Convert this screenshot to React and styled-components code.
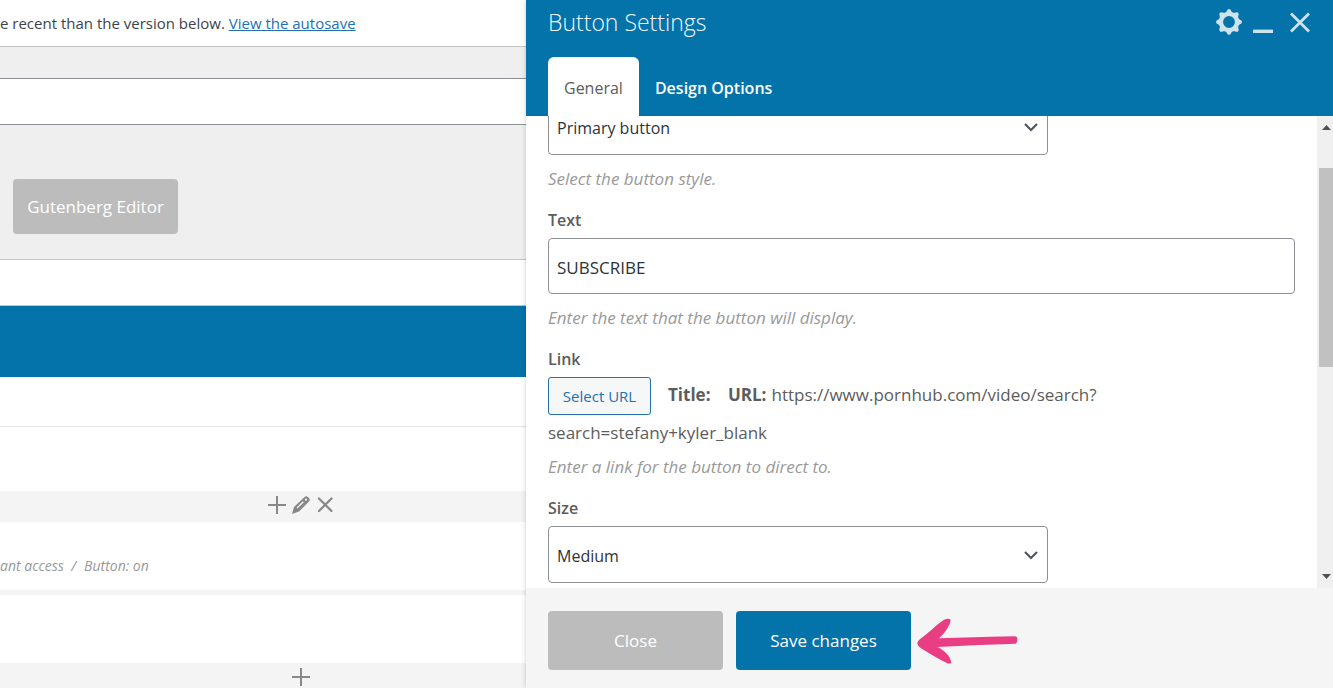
import React, { useLayoutEffect, useRef, useState } from "react";
import styled, { createGlobalStyle } from "styled-components";

const GlobalStyle = createGlobalStyle`
  * {
    box-sizing: border-box;
  }
  body {
    margin: 0;
    font-family: "Open Sans", "Noto Sans", sans-serif;
    color: #5c5c5c;
    background: #fff;
  }
  button, input, select {
    font-family: inherit;
    margin: 0;
  }
`;

const Layout = styled.div`
  display: grid;
  grid-template-columns: minmax(0, 526fr) minmax(0, 807fr);
  height: 100vh;
  overflow: hidden;
`;

/* editor page behind the panel */

const Editor = styled.main`
  display: flex;
  flex-direction: column;
  min-height: 0;
  overflow: hidden;
  white-space: nowrap;
`;

const Notice = styled.div`
  flex: none;
  padding: 11px 0;
  font-size: 15px;
  line-height: 24px;
  color: #3c434a;
  border-bottom: 1px solid #c3c4c7;
  a {
    color: #2271b1;
  }
`;

const TitleArea = styled.div`
  flex: none;
  padding: 31px 0 54px;
  background: #efefef;
`;

const TitleInput = styled.input`
  display: block;
  width: 100%;
  height: 47px;
  padding: 0 8px;
  font-size: 18px;
  background: #fff;
  border: solid #8c8f94;
  border-width: 1px 0;
  border-radius: 0;
  outline: none;
`;

const SwitchArea = styled.div`
  flex: none;
  padding: 0 13px 25px;
  background: #efefef;
  border-bottom: 1px solid #c3c4c7;
`;

const Button = styled.button`
  height: ${({ $height }) => $height || 59}px;
  width: ${({ $width }) => $width || 175}px;
  padding: 0;
  border: none;
  border-radius: 4px;
  font-size: 17px;
  color: #fff;
  background: ${({ $primary }) => ($primary ? "#0473aa" : "#bcbcbc")};
`;

const BuilderHead = styled.div`
  flex: none;
  height: 45px;
`;

const BuilderBar = styled.div`
  flex: none;
  height: 72px;
  background: #0473aa;
  border-top: 1px solid #c3c4c7;
`;

const BuilderNav = styled.div`
  flex: none;
  height: 50px;
  margin-bottom: 64px;
  border-bottom: 1px solid #e5e5e5;
`;

const Controls = styled.div`
  flex: none;
  display: flex;
  justify-content: center;
  align-items: center;
  gap: 4px;
  height: 31px;
  padding: 0 0 4px 75px;
  background: #f4f4f4;
`;

const ControlButton = styled.button`
  display: flex;
  padding: 0;
  border: none;
  background: none;
  color: #888;
`;

const ElementRow = styled.div`
  flex: none;
  height: 68px;
  padding-top: 33px;
  font-size: 14px;
  line-height: 22px;
  font-style: italic;
  color: #999;
  span + span {
    margin-left: 8px;
  }
`;

const Divider = styled.div`
  flex: none;
  height: 5px;
  margin-bottom: 68px;
  background: #f4f4f4;
`;

/* settings panel */

const Panel = styled.aside`
  display: flex;
  flex-direction: column;
  min-height: 0;
  background: #fff;
  box-shadow: 0 0 5px rgba(0, 0, 0, 0.2);
`;

const PanelHeader = styled.header`
  flex: none;
  padding: 4px 22px 0;
  background: #0473aa;
`;

const HeaderTop = styled.div`
  display: flex;
  justify-content: space-between;
  align-items: center;
  height: 36px;
`;

const PanelTitle = styled.h2`
  margin: 0;
  font-size: 23px;
  font-weight: 300;
  color: #f2f8fb;
`;

const HeaderActions = styled.div`
  display: flex;
  gap: 10px;
  button:last-child {
    margin-left: 5px;
  }
`;

const IconButton = styled.button`
  display: flex;
  padding: 0;
  border: none;
  background: none;
  color: #cde3ee;
`;

const Tabs = styled.div`
  display: flex;
  margin-top: 17px;
`;

const Tab = styled.button`
  height: 59px;
  padding: 2px 16px 0;
  border: none;
  border-radius: 6px 6px 0 0;
  font-size: 16px;
  font-weight: ${({ $active }) => ($active ? 400 : 600)};
  color: ${({ $active }) => ($active ? "#5c5c5c" : "#fff")};
  background: ${({ $active }) => ($active ? "#fff" : "transparent")};
`;

const PanelBody = styled.div`
  flex: 1;
  display: flex;
  min-height: 0;
`;

const Fields = styled.div`
  flex: 1;
  min-width: 0;
  padding: 0 22px 30px;
  overflow: hidden;
`;

const Field = styled.div`
  margin-bottom: 18px;
`;

const Label = styled.label`
  display: block;
  margin-bottom: 6px;
  font-size: 16px;
  line-height: 24px;
  font-weight: 600;
`;

const Description = styled.p`
  margin: ${({ $tight }) => ($tight ? 4 : 12)}px 0 0;
  font-size: 17px;
  line-height: 23px;
  font-style: italic;
  color: #999;
`;

const SelectWrap = styled.div`
  position: relative;
  width: 67%;
  svg {
    position: absolute;
    right: 10px;
    top: 50%;
    transform: translateY(-50%);
    pointer-events: none;
  }
`;

const Select = styled.select`
  display: block;
  appearance: none;
  width: 100%;
  height: 57px;
  padding: 2px 8px 0;
  font-size: 16px;
  color: #2c3338;
  background: #fff;
  border: 1px solid #8c8f94;
  border-radius: 4px;
`;

const TextInput = styled.input`
  display: block;
  width: 100%;
  height: 56px;
  padding: 2px 8px 0;
  font-size: 17px;
  color: #2c3338;
  background: #fff;
  border: 1px solid #8c8f94;
  border-radius: 4px;
`;

const LinkValue = styled.div`
  max-width: 560px;
  font-size: 17px;
  line-height: 36px;
  b {
    margin-right: 5px;
  }
  b + b {
    margin-left: 8px;
  }
`;

const UrlButton = styled.button`
  height: 38px;
  width: 103px;
  margin-right: 17px;
  padding: 0;
  font-size: 15px;
  vertical-align: top;
  color: #2271b1;
  background: #f6f7f7;
  border: 1px solid #2271b1;
  border-radius: 3px;
`;

const Scrollbar = styled.div`
  flex: none;
  display: flex;
  flex-direction: column;
  align-items: center;
  width: 16px;
  padding: 9px 0 9px 2px;
  background: #f0f0f0;
`;

const Track = styled.div`
  flex: 1;
  width: 100%;
  padding-top: 38px;
`;

const Thumb = styled.div`
  height: 49%;
  background: #c1c1c1;
`;

const PanelFooter = styled.footer`
  flex: none;
  display: flex;
  align-items: center;
  gap: 13px;
  padding: 23px 22px 18px;
  background: #f5f5f5;
`;

const ArrowWrap = styled.div`
  display: flex;
  margin-left: -7px;
`;

const PlusIcon = () => (
  <svg width="20" height="20" viewBox="0 0 20 20" fill="none" stroke="currentColor" strokeWidth="2">
    <path d="M10 1v18M1 10h18" />
  </svg>
);

const PencilIcon = () => (
  <svg width="20" height="20" viewBox="0 0 20 20" fill="currentColor" fillRule="evenodd">
    <path d="M1 19L3 12L13.5 2Q15 .6 17 2L18.3 3.4Q19.6 5 18 6.5L8 16.5ZM6.6 13.5L12.8 7.3L11.8 6.3L5.6 12.5ZM14 4.3A1 1 0 1 0 16 5A1 1 0 0 0 14 4.3Z" />
  </svg>
);

const RemoveIcon = () => (
  <svg width="20" height="20" viewBox="0 0 20 20" fill="none" stroke="currentColor" strokeWidth="2.2">
    <path d="M4 3.5l12.5 12.5M16.5 3.5l-12.5 12.5" strokeLinecap="round" />
  </svg>
);

const GearIcon = () => (
  <svg width="26" height="26" viewBox="-13 -13 26 26" fill="currentColor">
    <circle r="8" fill="none" stroke="currentColor" strokeWidth="4.2" />
    {[0, 45, 90, 135, 180, 225, 270, 315].map((deg) => (
      <path key={deg} d="M-4 -9L-2.4 -10.6Q-1.6 -13 0 -13Q1.6 -13 2.4 -10.6L4 -9Z" transform={`rotate(${deg})`} />
    ))}
  </svg>
);

const MinimizeIcon = () => (
  <svg width="22" height="26" viewBox="0 0 22 26" fill="none" stroke="currentColor" strokeWidth="3.4">
    <path d="M1 22.3h20" />
  </svg>
);

const CloseIcon = () => (
  <svg width="22" height="26" viewBox="0 0 22 26" fill="none" stroke="currentColor" strokeWidth="2.8">
    <path d="M2 4.5l18 18M20 4.5l-18 18" />
  </svg>
);

const Chevron = () => (
  <svg width="14" height="10" viewBox="0 0 14 10" fill="none" stroke="#50575e" strokeWidth="2.2">
    <path d="M1 2l6 6 6-6" />
  </svg>
);

const ScrollArrow = ({ down }) => (
  <svg width="9" height="5" viewBox="0 0 9 5" fill="#505050">
    <path d={down ? "M0 0h9L4.5 5z" : "M0 5h9L4.5 0z"} />
  </svg>
);

const PinkArrow = () => (
  <svg width="101" height="46" viewBox="0 0 303 138" fill="#e93e83">
    <path d="M1 75C2 69 8 64 20 55C42 39 60 18 80 6Q92 0 100 4Q102 10 96 22Q86 44 66 61L220 56L293 55Q303 56 301 66Q301 75 296 77L170 82L62 87C84 98 101 116 103 134Q98 139 88 134C60 122 34 104 12 91Q1 84 1 75Z" />
  </svg>
);

const App = () => {
  const fieldsRef = useRef(null);
  const [text, setText] = useState("SUBSCRIBE");
  const [tab, setTab] = useState("General");

  useLayoutEffect(() => {
    fieldsRef.current.scrollTop = 18;
  }, []);

  return (
    <>
      <GlobalStyle />
      <Layout>
        <Editor>
          <Notice>
            e recent than the version below. <a href="#autosave">View the autosave</a>
          </Notice>
          <TitleArea>
            <TitleInput aria-label="Title" />
          </TitleArea>
          <SwitchArea>
            <Button $width={165} $height={55}>Gutenberg Editor</Button>
          </SwitchArea>
          <BuilderHead />
          <BuilderBar />
          <BuilderNav />
          <Controls>
            <ControlButton aria-label="Add"><PlusIcon /></ControlButton>
            <ControlButton aria-label="Edit"><PencilIcon /></ControlButton>
            <ControlButton aria-label="Remove"><RemoveIcon /></ControlButton>
          </Controls>
          <ElementRow>
            <span>ant access&nbsp; /</span>
            <span>Button: on</span>
          </ElementRow>
          <Divider />
          <Controls>
            <ControlButton aria-label="Add"><PlusIcon /></ControlButton>
          </Controls>
        </Editor>

        <Panel>
          <PanelHeader>
            <HeaderTop>
              <PanelTitle>Button Settings</PanelTitle>
              <HeaderActions>
                <IconButton aria-label="Settings"><GearIcon /></IconButton>
                <IconButton aria-label="Minimize"><MinimizeIcon /></IconButton>
                <IconButton aria-label="Close panel"><CloseIcon /></IconButton>
              </HeaderActions>
            </HeaderTop>
            <Tabs>
              {["General", "Design Options"].map((name) => (
                <Tab key={name} $active={tab === name} onClick={() => setTab(name)}>
                  {name}
                </Tab>
              ))}
            </Tabs>
          </PanelHeader>

          <PanelBody>
            <Fields ref={fieldsRef}>
              <Field>
                <SelectWrap>
                  <Select aria-label="Style">
                    <option>Primary button</option>
                  </Select>
                  <Chevron />
                </SelectWrap>
                <Description>Select the button style.</Description>
              </Field>
              <Field>
                <Label htmlFor="text">Text</Label>
                <TextInput id="text" value={text} onChange={(e) => setText(e.target.value)} />
                <Description>Enter the text that the button will display.</Description>
              </Field>
              <Field>
                <Label htmlFor="link">Link</Label>
                <LinkValue>
                  <UrlButton id="link">Select URL</UrlButton>
                  <b>Title:</b> <b>URL:</b>
                  https://www.pornhub.com/video/search?<wbr />search=stefany+kyler_blank
                </LinkValue>
                <Description $tight>Enter a link for the button to direct to.</Description>
              </Field>
              <Field>
                <Label htmlFor="size">Size</Label>
                <SelectWrap>
                  <Select id="size">
                    <option>Medium</option>
                  </Select>
                  <Chevron />
                </SelectWrap>
              </Field>
            </Fields>
            <Scrollbar>
              <ScrollArrow />
              <Track>
                <Thumb />
              </Track>
              <ScrollArrow down />
            </Scrollbar>
          </PanelBody>

          <PanelFooter>
            <Button>Close</Button>
            <Button $primary>Save changes</Button>
            <ArrowWrap>
              <PinkArrow />
            </ArrowWrap>
          </PanelFooter>
        </Panel>
      </Layout>
    </>
  );
};

export default App;
